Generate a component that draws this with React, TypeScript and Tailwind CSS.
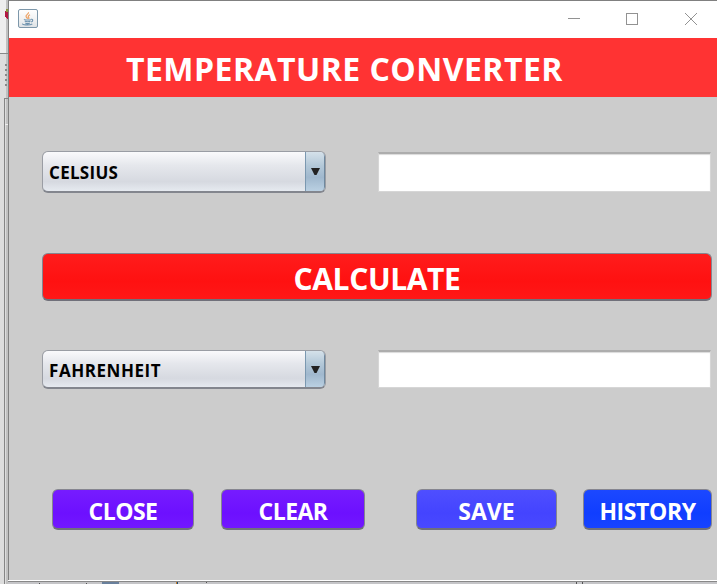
import React from "react";

function JavaIcon() {
  return (
    <svg width="20" height="20" viewBox="0 0 20 20" fill="none">
      <defs>
        <linearGradient id="tile" x1="0" y1="0" x2="0" y2="1">
          <stop offset="0" stopColor="#fff" />
          <stop offset="0.55" stopColor="#f0f2f3" />
          <stop offset="1" stopColor="#dde1e4" />
        </linearGradient>
      </defs>
      <rect x="0.5" y="0.5" width="19" height="18" rx="1.5" fill="url(#tile)" stroke="#7d97aa" />
      <path d="M10.5 3.2c.8 1.8-3.6 2.7-2.4 4.6.4.8 1.2 1.2 1.5 1.9M12 5.8c-1.5.8-2.4 1.7-1.2 2.8.4.5.1 1-.3 1.400" stroke="#eca061" strokeWidth="1.2" />
      <path d="M6.5 10.3c-1.2.9 5.5 1 6.5.3M6.8 12.2c.9.8 4.8.8 5.7 0M7.3 14c1 .6 3.5.6 4.6 0M13 10.3c2.3-.5 2.2 1.9.2 2.6M5 14.7c-2 1.2 6.5 1.8 9.3.3" stroke="#6d92ae" strokeWidth="1.1" />
    </svg>
  );
}

function TitleBar() {
  return (
    <div className="flex h-[37px] bg-white">
      <div className="pt-2 pl-[9px]">
        <JavaIcon />
      </div>
      <svg className="mt-[11px] ml-auto mr-[19px]" width="130" height="14" viewBox="0 0 130 14" fill="none" stroke="#929292" shapeRendering="crispEdges">
        <path d="M0 6.5h12" />
        <path d="M58.5 1.5h11v11h-11z" />
        <path d="M117 1l12 12M129 1l-12 12" shapeRendering="auto" />
      </svg>
    </div>
  );
}

function Combo({ label, look }: { label: string; look: string }) {
  return (
    <div className={`flex w-[284px] overflow-hidden rounded-[6px] border border-[#9a9da4] border-b-2 border-b-[#83868e] bg-[linear-gradient(#fafafc,#e5e7ec_35%,#d6d9e0_76%,#e6eaf0)] ${look}`}>
      <div className="flex flex-1 items-center pt-[2px] pl-[6px] text-[17px] leading-none font-bold text-black">{label}</div>
      <div className="flex w-[20px] items-center justify-center rounded-r-[4px] border-r border-l border-r-[#6f899f] border-l-[#7b98b0] bg-[linear-gradient(#d5e1ea,#b3c8d8_35%,#a0b8ce_65%,#bad0e2)]">
        <svg width="9" height="9" viewBox="0 0 9 9">
          <path d="M0 1h9L5.5 8h-2z" fill="#222" />
        </svg>
      </div>
    </div>
  );
}

function Field({ size }: { size: string }) {
  return <div className={`w-[333px] border border-t-2 border-[#d6d6d6] border-t-[#adadad] bg-white shadow-[inset_0_1px_1px_#dadada] ${size}`} />;
}

function Button({ label, look }: { label: string; look: string }) {
  return (
    <button className={`flex items-center justify-center rounded-[6px] border border-[#85858f] border-b-2 border-b-[#70707a] leading-none font-bold whitespace-nowrap text-white ${look}`}>
      {label}
    </button>
  );
}

export default function App() {
  return (
    <div className="flex h-[584px] w-[717px] overflow-hidden bg-[#c7c7c7] font-['Open_Sans','Noto_Sans',sans-serif]">
      <svg className="shrink-0" width="8" height="584" viewBox="0 0 8 584" shapeRendering="crispEdges">
        <path d="M0 0h8v53H0z" fill="#eee" />
        <path d="M0 53h8v531H0z" fill="#ddd" />
        <path d="M6 0h2v584H6z" fill="#c1c1c1" />
        <path d="M8 9q-3 0-3 5t3 5z" fill="#b21843" />
        <path d="M6 9h2v3H6z" fill="#8b963e" />
        <path d="M0 53h8v1H0z" fill="#888" />
        <path d="M5 64h2v2H5zM5 69h2v2H5zM5 74h2v2H5zM5 79h2v2H5zM5 84h2v2H5z" fill="#888" />
        <path d="M4 98h4v1H5v485H4z" fill="#858585" />
        <path d="M5 124h3v1H5z" fill="#eee" />
      </svg>
      <div className="flex flex-1 flex-col">
        <div className="h-[580px] border-t border-l border-[#808080] bg-[#ccc]">
          <TitleBar />
          <header className="flex h-[59px] items-center bg-[#f33] pl-[117px] text-[32px] leading-none font-bold tracking-[0.46px] whitespace-nowrap text-white">
            <h1 className="pt-[3px]">TEMPERATURE CONVERTER</h1>
          </header>
          <main className="pl-[33px]">
            <div className="flex gap-[52px] pt-[54px]">
              <Combo label="CELSIUS" look="h-[42px] tracking-[0.3px]" />
              <Field size="mt-px h-[40px]" />
            </div>
            <div className="flex pt-[60px]">
              <Button label="CALCULATE" look="h-[48px] w-[670px] pt-[5px] bg-[linear-gradient(#ff1c1c,#ff1111_60%,#ff1717)] text-[30px] tracking-[-0.4px]" />
            </div>
            <div className="flex gap-[52px] pt-[49px]">
              <Combo label="FAHRENHEIT" look="h-[39px] tracking-[0.55px]" />
              <Field size="h-[38px]" />
            </div>
            <div className="flex pt-[100px] pl-[10px]">
              <Button label="CLOSE" look="h-[41px] w-[142px] pt-[5px] bg-[linear-gradient(#761cff,#6d10ff_60%,#7217ff)] text-[23px] tracking-[-0.55px]" />
              <Button label="CLEAR" look="ml-[27px] h-[41px] w-[144px] pt-[5px] bg-[linear-gradient(#761cff,#6d10ff_60%,#7217ff)] text-[23px] tracking-[-0.55px]" />
              <Button label="SAVE" look="ml-[51px] h-[41px] w-[141px] pt-[5px] bg-[linear-gradient(#4f4fff,#4444ff_60%,#4949ff)] text-[23px]" />
              <Button label="HISTORY" look="ml-[26px] h-[41px] w-[129px] pt-[5px] bg-[linear-gradient(#1c48ff,#103eff_60%,#1743ff)] text-[23px] tracking-[-0.4px]" />
            </div>
          </main>
        </div>
        <div className="h-px bg-white" />
        <div className="h-px bg-[#888]" />
        <svg width="709" height="2" viewBox="0 0 709 2" shapeRendering="crispEdges">
          <path d="M0 0h709v2H0z" fill="#c5c5c8" />
          <path d="M94 0h17v2H94z" fill="#69809c" />
          <path d="M31 1h1v1h-1zM78 1h1v1h-1zM198 0h1v1h-1zM568 0h1v2h-1zM574 0h1v2h-1z" fill="#555" />
          <path d="M168 0h1v2h-1z" fill="#c77b24" />
          <path d="M169 0h1v2h-1z" fill="#164a79" />
        </svg>
      </div>
    </div>
  );
}
